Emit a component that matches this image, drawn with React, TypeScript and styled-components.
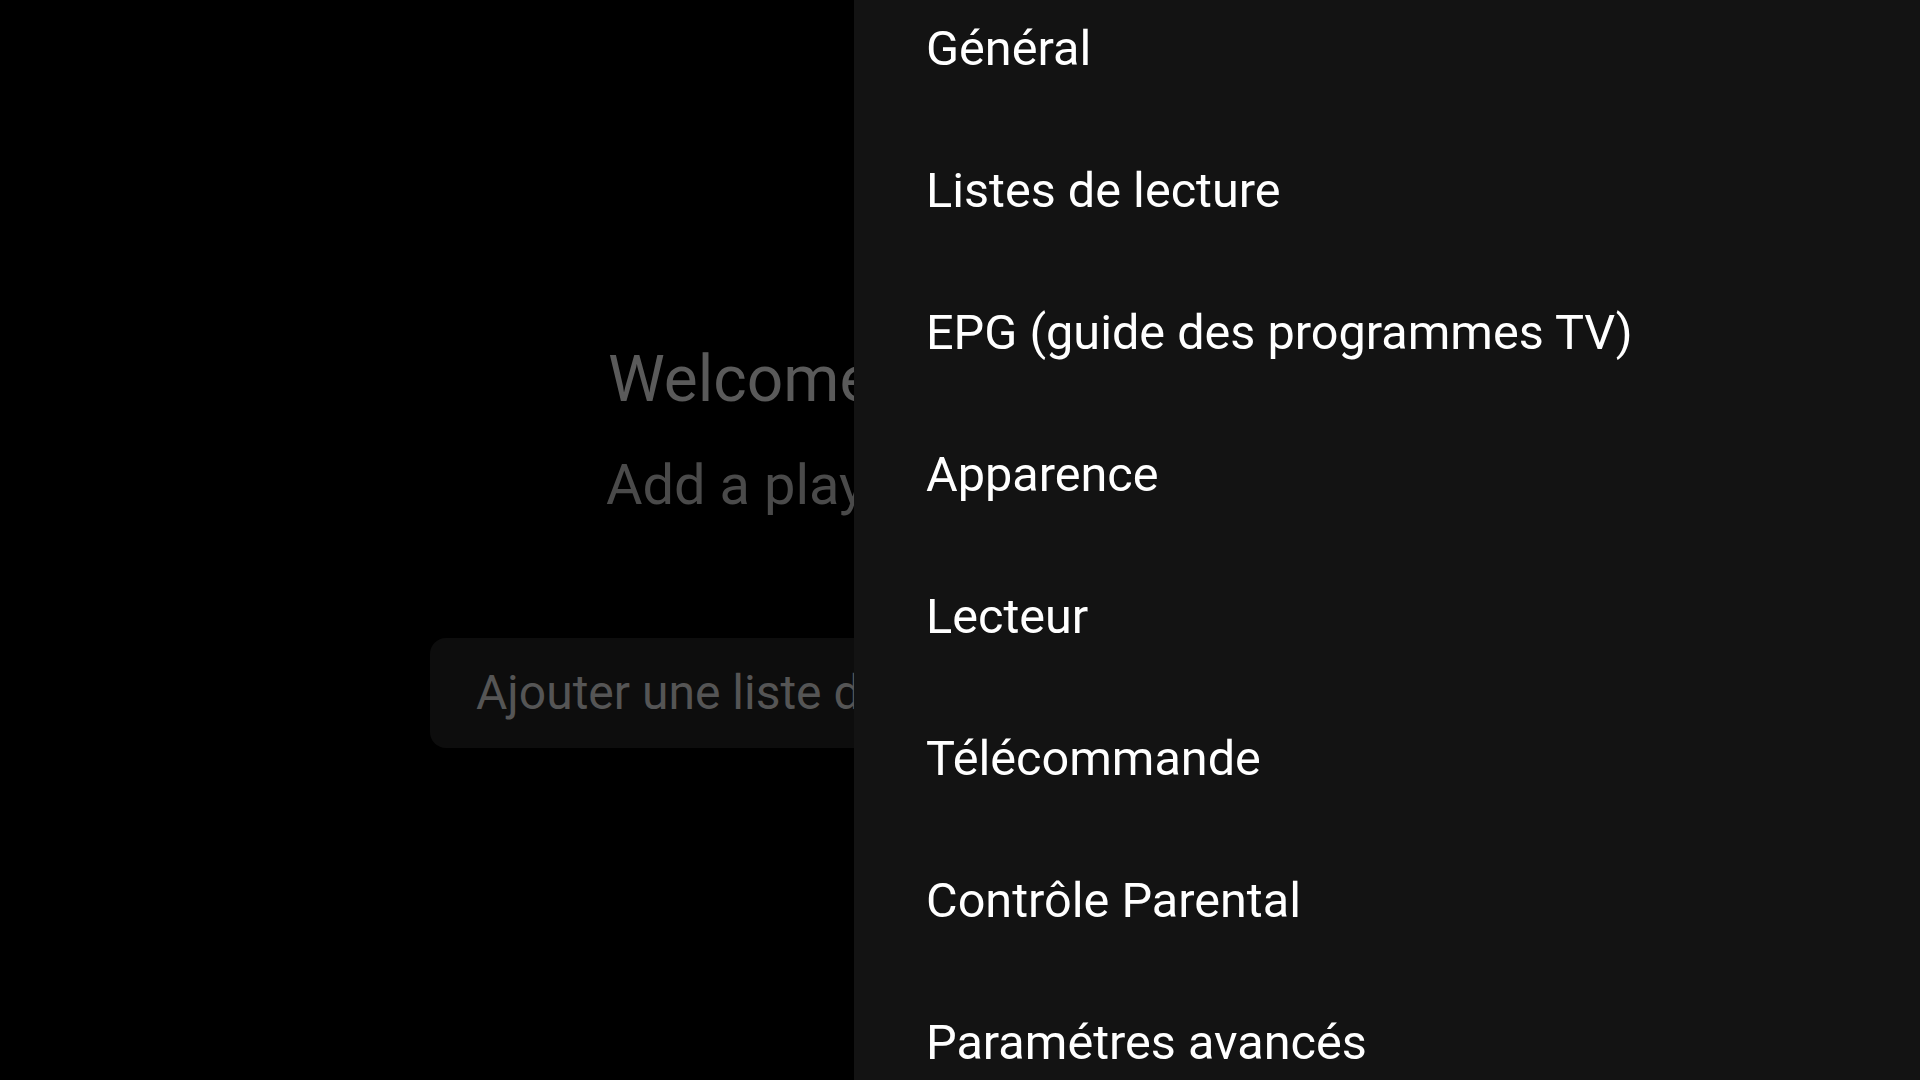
import React from "react";
import styled, { createGlobalStyle } from "styled-components";

const GlobalStyle = createGlobalStyle`
  html, body {
    margin: 0;
    padding: 0;
    background: #000;
    overflow: hidden;
  }
  body {
    font-family: Roboto, "Noto Sans", "Liberation Sans", sans-serif;
  }
  * { box-sizing: border-box; }
`;

const Screen = styled.div`
  position: relative;
  width: 1920px;
  height: 1080px;
  background: #000;
  overflow: hidden;
`;

const Home = styled.main`
  width: 1060px;
  margin: 0 auto;
  padding-top: 348px;
  display: flex;
  flex-direction: column;
`;

const Title = styled.h1`
  margin: 0;
  padding-left: 178px;
  font-size: 64px;
  line-height: 1;
  font-weight: 400;
  color: #5a5a5a;
  white-space: nowrap;
`;

const Subtitle = styled.p`
  margin: 45px 0 0;
  padding-left: 176px;
  font-size: 56px;
  line-height: 1;
  font-weight: 400;
  color: #4a4a4a;
  white-space: nowrap;
`;

const AddButton = styled.button`
  margin-top: 125px;
  height: 110px;
  width: 100%;
  display: flex;
  align-items: center;
  padding: 0 46px;
  border: none;
  border-radius: 16px;
  background: #0d0d0d;
  color: #555;
  font-family: inherit;
  font-size: 48px;
  line-height: 1;
  text-align: left;
  white-space: nowrap;
`;

const Drawer = styled.nav`
  position: absolute;
  top: 0;
  right: 0;
  bottom: 0;
  width: 1066px;
  background: #131313;
  display: flex;
  flex-direction: column;
`;

const Item = styled.div`
  height: 142px;
  flex: none;
  padding: 20px 0 0 72px;
  font-size: 48.6px;
  line-height: normal;
  color: #fff;
  white-space: nowrap;
`;

const items = [
  "Général",
  "Listes de lecture",
  "EPG (guide des programmes TV)",
  "Apparence",
  "Lecteur",
  "Télécommande",
  "Contrôle Parental",
  "Paramétres avancés",
];

export default function App() {
  return (
    <>
      <GlobalStyle />
      <Screen>
        <Home>
          <Title>Welcome to IPTV</Title>
          <Subtitle>Add a playlist to get started</Subtitle>
          <AddButton>Ajouter une liste de lecture</AddButton>
        </Home>
        <Drawer>
          {items.map((label) => (
            <Item key={label}>{label}</Item>
          ))}
        </Drawer>
      </Screen>
    </>
  );
}
